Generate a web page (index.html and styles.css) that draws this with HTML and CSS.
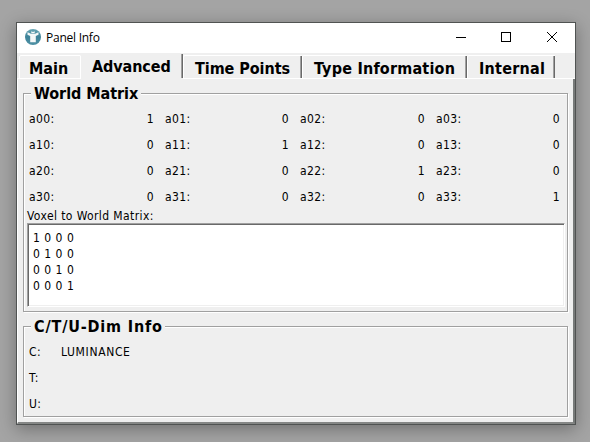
FILE: index.html
```
<!DOCTYPE html>
<html lang="en">
<head>
<meta charset="utf-8">
<title>Panel Info</title>
<link rel="stylesheet" href="styles.css">
</head>
<body>
<main class="window">
  <header class="titlebar">
    <svg class="logo" width="16" height="16" viewBox="0 0 16 16">
      <defs><linearGradient id="disc" x1="0" y1="0" x2="0" y2="1"><stop offset="0" stop-color="#6aa7b5"/><stop offset=".5" stop-color="#3d8298"/><stop offset="1" stop-color="#4f91a5"/></linearGradient></defs>
      <circle cx="8" cy="8" r="8" fill="url(#disc)"/>
      <path d="M2.5 3.2 6 4.8h4l3.5-1.6v2.6L10.8 7v6.2H5.2V7L2.5 5.8z" fill="#f5f8f8"/>
      <path d="M6.3 2.3 8 3l1.7-.7v2H6.3z" fill="#f5f8f8"/>
    </svg>
    <h1 class="title">Panel Info</h1>
    <svg class="controls" width="102" height="12" viewBox="0 0 102 12" fill="none" stroke="#000" shape-rendering="crispEdges">
      <path d="M0 6.5h10M45.5 1.5h9v9h-9z"/>
      <path d="M91 1l10 10M101 1 91 11" shape-rendering="auto"/>
    </svg>
  </header>
  <nav class="tabs">
    <span class="tab main">Main</span>
    <span class="tab advanced selected">Advanced</span>
    <span class="tab time">Time Points</span>
    <span class="tab type">Type Information</span>
    <span class="tab internal">Internal</span>
  </nav>
  <div class="pane">
    <section class="group world">
      <h2 class="legend">World Matrix</h2>
      <div class="matrix">
        <span>a00:</span><b>1</b><span>a01:</span><b>0</b><span>a02:</span><b>0</b><span>a03:</span><b>0</b>
        <span>a10:</span><b>0</b><span>a11:</span><b>1</b><span>a12:</span><b>0</b><span>a13:</span><b>0</b>
        <span>a20:</span><b>0</b><span>a21:</span><b>0</b><span>a22:</span><b>1</b><span>a23:</span><b>0</b>
        <span>a30:</span><b>0</b><span>a31:</span><b>0</b><span>a32:</span><b>0</b><span>a33:</span><b>1</b>
      </div>
      <div class="caption">Voxel to World Matrix:</div>
      <pre class="field">1 0 0 0
0 1 0 0
0 0 1 0
0 0 0 1</pre>
    </section>
    <section class="group dims">
      <h2 class="legend dim-legend">C/T/U-Dim Info</h2>
      <div class="dim-list">
        <span>C:</span><span class="lum">LUMINANCE</span>
        <span>T:</span><span></span>
        <span>U:</span><span></span>
      </div>
    </section>
  </div>
</main>
</body>
</html>
```
FILE: styles.css
```
* { box-sizing: border-box; }
body {
  margin: 0;
  width: 590px;
  height: 442px;
  overflow: hidden;
  padding: 22px 14px 17px 16px;
  background: #a4a4a4;
  color: #000;
  font: 12px/16px "DejaVu Sans Condensed", "DejaVu Sans", sans-serif;
  letter-spacing: .4px;
}
.window {
  width: 560px;
  height: 403px;
  border: 1px solid #505352;
  background: #efefef;
  box-shadow: 0 4px 16px rgba(0, 0, 0, .32);
}
.titlebar {
  display: flex;
  align-items: center;
  height: 30px;
  padding: 0 17px 0 8px;
  background: #fff;
}
.logo { margin-top: -2px; }
.title {
  flex: 1;
  margin: 0 0 0 5px;
  font: 12px/16px "Open Sans", sans-serif;
  letter-spacing: -.25px;
}
.controls { margin-top: -2px; }
.tabs {
  display: flex;
  align-items: flex-end;
  height: 26px;
  padding-left: 2px;
  box-shadow: inset 0 -1px #fff;
}
.tab {
  height: 24px;
  padding: 3px 0 0 10px;
  border: solid #fff;
  border-width: 1px 0 1px 1px;
  border-radius: 2px 1px 0 0;
  font: bold 16px/20px "DejaVu Sans Condensed", "DejaVu Sans", sans-serif;
  letter-spacing: 0;
  white-space: nowrap;
  position: relative;
}
.tab::after {
  content: "";
  position: absolute;
  right: 0;
  top: 0;
  width: 2px;
  height: 22px;
  background: linear-gradient(90deg, #a0a0a0 50%, #696969 50%);
}
.main { width: 62px; padding-left: 9px; border-right-width: 1px; }
.main::after { display: none; }
.advanced { width: 102px; padding-left: 10px; letter-spacing: -.1px; }
.selected { height: 26px; border-color: #efefef; background: #efefef; }
.selected::after { height: 24px; }
.time { width: 119px; padding-left: 11px; letter-spacing: -.05px; }
.type { width: 165px; padding-left: 11px; letter-spacing: .2px; }
.internal { width: 88px; padding-left: 11px; letter-spacing: .25px; }
.pane {
  height: 345px;
  padding: 14px 5px 0;
  border: solid;
  border-width: 0 2px 2px 1px;
  border-color: #fff #777a79 #858786 #fff;
}
.group {
  width: 545px;
  border: 1px solid #a0a0a0;
  box-shadow: 1px 1px #fff, inset 1px 1px #fff;
}
.world { height: 219px; }
.dims { height: 91px; margin-top: 14px; }
.legend {
  width: 110px;
  height: 20px;
  margin: -10px 0 0 7px;
  padding-left: 3px;
  background: #efefef;
  font: bold 16px/20px "DejaVu Sans Condensed", "DejaVu Sans", sans-serif;
  letter-spacing: -.05px;
  white-space: nowrap;
}
.dim-legend { width: 134px; letter-spacing: .83px; }
.matrix {
  display: grid;
  grid-template-columns: 30px 95px 41px 94px 41px 95px 41px 94px;
  grid-auto-rows: 26px;
  align-items: center;
  margin: 2px 0 0 5px;
}
.matrix span:nth-child(8n + 3), .matrix span:nth-child(8n + 5), .matrix span:nth-child(8n + 7) { padding-left: 11px; }
.matrix b { font-weight: normal; text-align: right; }
.caption { margin: -2px 0 0 3px; }
.field {
  width: 538px;
  height: 84px;
  margin: -1px 0 0 3px;
  padding: 6px 5px;
  border: 1px solid;
  border-color: #a0a0a0 #fff #fff #a0a0a0;
  background: #fff;
  box-shadow: inset 1px 1px #696969, inset -1px -1px #efefef;
  font: inherit;
  letter-spacing: .5px;
}
.dim-list {
  display: grid;
  grid-template-columns: 32px 1fr;
  grid-auto-rows: 26px;
  align-items: center;
  margin: 2px 0 0 5px;
}
.lum { letter-spacing: .65px; }
```
